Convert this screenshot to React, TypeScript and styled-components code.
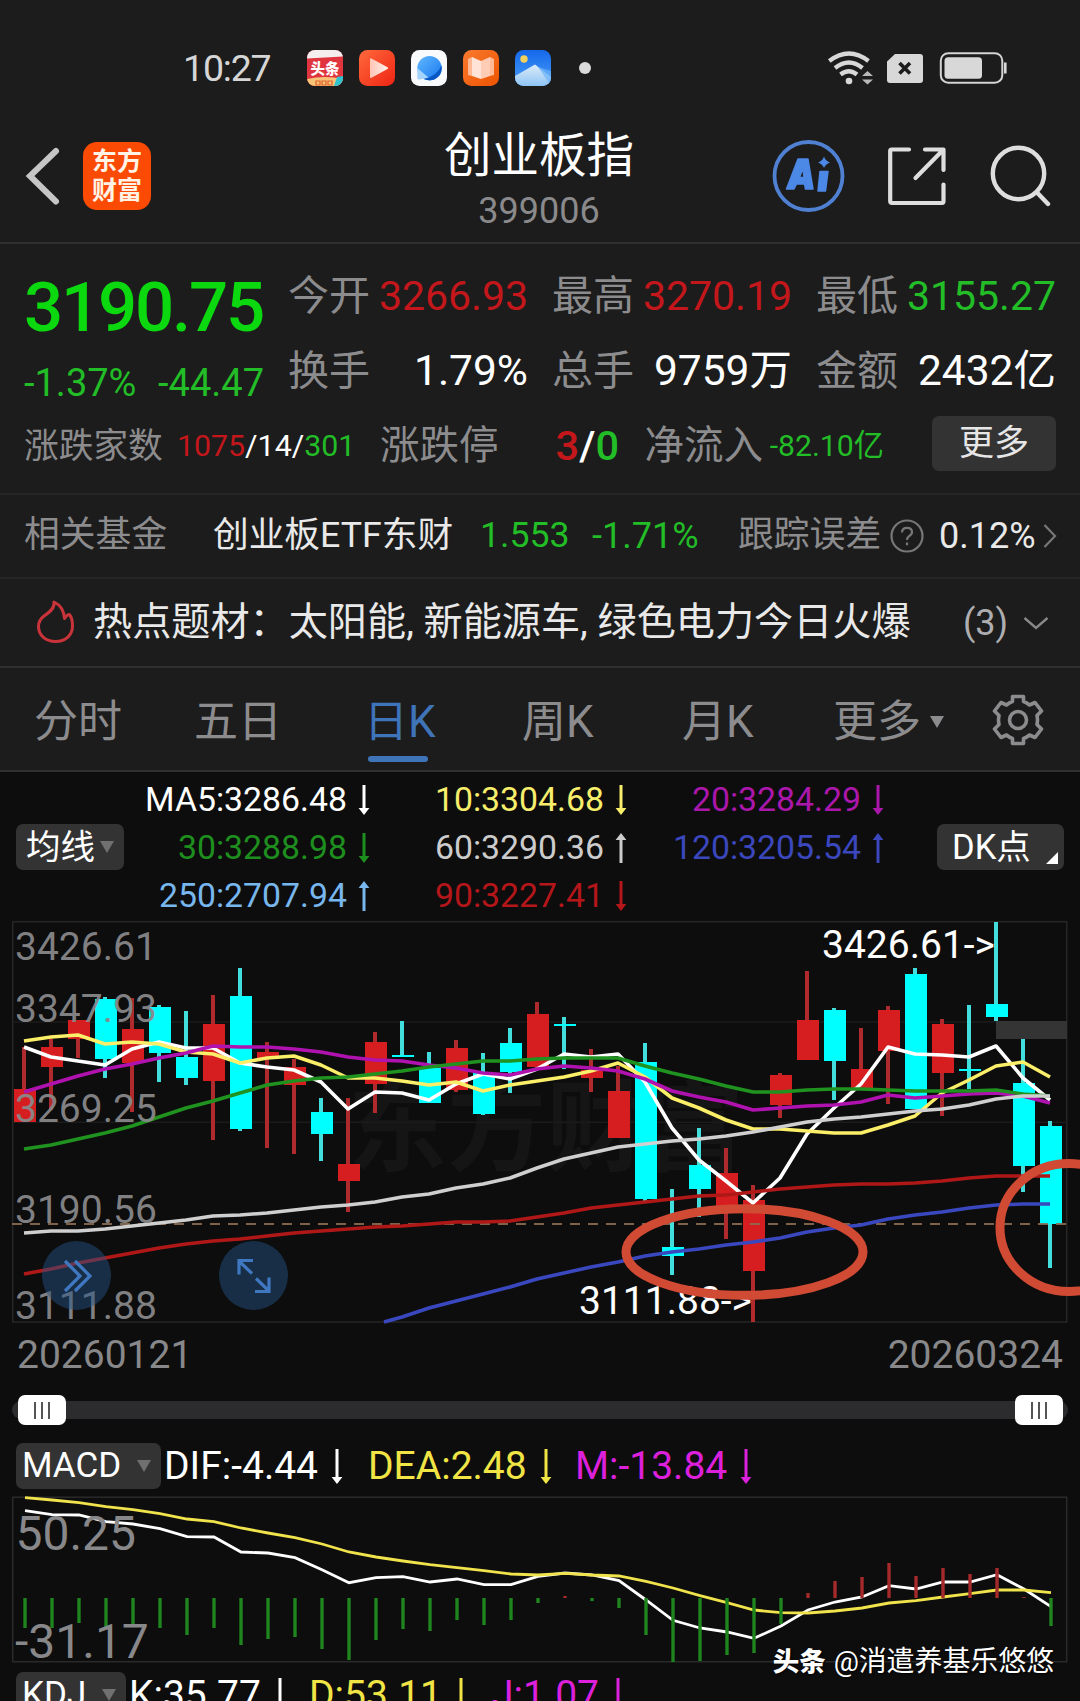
import React from "react";
import styled, { createGlobalStyle } from "styled-components";

const c = {
  panel: "#1c1c1c",
  deep: "#0d0d0d",
  line: "#303030",
  softLine: "#262626",
  label: "#8c8c8e",
  red: "#c4171b",
  green: "#22bd27",
  blue: "#3f74b8",
  chip: "#333333",
};

const Global = createGlobalStyle`
  html, body { margin: 0; background: ${c.deep}; }
  * { box-sizing: border-box; }
  button { border: 0; padding: 0; font: inherit; color: inherit; background: none; }
  svg { display: block; flex: none; }
`;

const Screen = styled.div`
  width: 1080px;
  height: 1701px;
  overflow: hidden;
  display: flex;
  flex-direction: column;
  background: ${c.deep};
  color: #fff;
  font-family: Roboto, "Noto Sans CJK SC", sans-serif;
  line-height: 1;
  white-space: nowrap;
`;

/* ---------- status bar ---------- */
const StatusBar = styled.div`
  height: 102px;
  flex: none;
  padding: 34px 73px 0 183px;
  display: flex;
  align-items: center;
  background: ${c.panel};
`;
const Clock = styled.span`
  width: 124px;
  padding-top: 2px;
  font-size: 37.5px;
  letter-spacing: -1.2px;
  color: #d6d6d6;
`;
const AppRow = styled.div`
  display: flex;
  gap: 16px;
  flex: 1;
  align-items: center;
`;
const Dot = styled.i`
  width: 12px;
  height: 12px;
  margin-left: 12px;
  border-radius: 50%;
  background: #dadada;
`;
const SystemIcons = styled.div`
  display: flex;
  align-items: center;
  gap: 14px;
`;

/* ---------- title bar ---------- */
const TitleBar = styled.header`
  height: 142px;
  flex: none;
  padding: 8px 29px 0 24px;
  display: grid;
  grid-template-columns: 320px 1fr 320px;
  align-items: center;
  background: ${c.panel};
  border-bottom: 2px solid ${c.line};
`;
const Side = styled.div<{ $end?: boolean }>`
  display: flex;
  align-items: center;
  justify-content: ${(p) => (p.$end ? "flex-end" : "flex-start")};
`;
const Brand = styled.div`
  width: 68px;
  height: 68px;
  margin-left: 21px;
  border-radius: 14px;
  background: #fb4a04;
  display: grid;
  place-content: center;
  text-align: center;
  font-size: 25px;
  line-height: 29px;
  font-weight: 700;
  color: #fff3e6;
`;
const Heading = styled.div`
  text-align: center;
  padding: 7px 0 0 3px;
`;
const Name = styled.h1`
  margin: 0;
  font-size: 47.5px;
  line-height: 56px;
  font-weight: 400;
`;
const Code = styled.div`
  margin-top: 6px;
  font-size: 36px;
  line-height: 42px;
  color: #8a8a8c;
`;

/* ---------- quote ---------- */
const Quote = styled.section`
  height: 251px;
  flex: none;
  padding: 15px 24px 0 24px;
  background: ${c.panel};
  border-bottom: 2px solid ${c.softLine};
`;
const QuoteTop = styled.div`
  display: flex;
  height: 149px;
`;
const PriceCol = styled.div`
  width: 264px;
  color: ${c.green};
`;
const Price = styled.div`
  height: 96px;
  line-height: 97px;
  font-size: 69px;
  font-weight: 500;
  letter-spacing: -2.2px;
  color: #0bd80f;
`;
const Change = styled.div`
  width: 240px;
  height: 55px;
  line-height: 56px;
  font-size: 38px;
  display: flex;
  justify-content: space-between;
`;
const Stats = styled.div`
  flex: 1;
  display: grid;
  grid-template-columns: repeat(3, 240px);
  grid-auto-rows: 75px;
  column-gap: 24px;
`;
const Stat = styled.div`
  display: flex;
  align-items: center;
  justify-content: space-between;
`;
const Label = styled.span<{ $size: number }>`
  font-size: ${(p) => p.$size}px;
  color: ${c.label};
`;
const Value = styled.span<{ $color?: string; $size?: number; $bold?: boolean }>`
  font-size: ${(p) => p.$size ?? 41.5}px;
  color: ${(p) => p.$color ?? "#fff"};
  font-weight: ${(p) => (p.$bold ? 500 : 400)};
`;
const Breadth = styled.div`
  height: 76px;
  display: flex;
  align-items: center;
`;
const Cell = styled.div<{ $w: number; $end?: boolean }>`
  width: ${(p) => p.$w}px;
  flex: none;
  display: flex;
  justify-content: ${(p) => (p.$end ? "flex-end" : "flex-start")};
`;
const MoreButton = styled.button`
  width: 124px;
  height: 55px;
  margin: 0 0 5px auto;
  border-radius: 7px;
  background: ${c.chip};
  color: #e6e6e6;
  font-size: 35px;
`;

/* ---------- related fund / hot topics ---------- */
const Strip = styled.div<{ $h: number; $strong?: boolean }>`
  height: ${(p) => p.$h}px;
  flex: none;
  padding: 0 24px;
  display: flex;
  align-items: center;
  background: ${c.panel};
  border-bottom: 2px solid ${(p) => (p.$strong ? c.line : c.softLine)};
  font-size: 35.7px;
  color: #e9e9e9;
`;
const Topic = styled.span`
  width: 870px;
  margin-left: 18px;
  padding-top: 1px;
  font-size: 39.15px;
`;
const Count = styled.span`
  width: 60px;
  font-size: 36px;
  color: #aeaeb0;
`;

/* ---------- period tabs ---------- */
const Tabs = styled.nav`
  height: 104px;
  flex: none;
  padding-left: 34px;
  display: flex;
  background: ${c.panel};
  border-bottom: 2px solid ${c.line};
`;
const Tab = styled.button<{ $w: number; $active?: boolean }>`
  width: ${(p) => p.$w}px;
  display: flex;
  flex-direction: column;
  align-items: flex-start;
  padding-top: 30px;
  font-size: 44px;
  line-height: 48px;
  color: ${(p) => (p.$active ? c.blue : "#8c8c8e")};
`;
const TabLine = styled.span`
  display: flex;
  align-items: center;
  gap: 9px;
`;
const Underline = styled.i`
  width: 60px;
  height: 6px;
  margin: 10px 0 0 4px;
  border-radius: 3px;
  background: ${c.blue};
`;
const Gear = styled.div`
  padding-top: 25px;
`;

/* ---------- main chart ---------- */
const LegendBar = styled.div`
  height: 148px;
  flex: none;
  padding: 2px 16px 0 16px;
  display: flex;
  align-items: center;
  justify-content: space-between;
`;
const Chip = styled.button<{ $w: number; $size?: number }>`
  width: ${(p) => p.$w}px;
  height: 46px;
  flex: none;
  padding: 0 10px 0 ${(p) => (p.$size ? 6 : 10)}px;
  border-radius: 7px;
  background: ${c.chip};
  color: #fff;
  font-size: ${(p) => p.$size ?? 34.5}px;
  line-height: 46px;
  display: flex;
  align-items: center;
  justify-content: space-between;
`;
const Corner = styled.i`
  align-self: flex-end;
  margin: 0 -4px 6px 0;
  border-left: 12px solid transparent;
  border-bottom: 12px solid #fff;
`;
const Down = styled.i<{ $w?: number; $color?: string }>`
  border: ${(p) => (p.$w ?? 14) / 2}px solid transparent;
  border-top: 12px solid ${(p) => p.$color ?? "#707070"};
  border-bottom: 0;
`;
const Legend = styled.div`
  display: grid;
  grid-template-columns: 248px 257px 257px;
  grid-auto-rows: 48px;
  flex: 1;
  padding-top: 1px;
`;
const LegendItem = styled.div<{ $color: string }>`
  display: flex;
  align-items: center;
  justify-content: flex-end;
  gap: 9px;
  font-size: 33.8px;
  color: ${(p) => p.$color};
`;
const ChartBox = styled.div`
  position: relative;
  height: 404px;
  flex: none;
`;
const Fab = styled.button<{ $left: number }>`
  position: absolute;
  left: ${(p) => p.$left}px;
  top: 321px;
  width: 69px;
  height: 69px;
  border-radius: 50%;
  background: rgba(38, 83, 134, 0.48);
  display: grid;
  place-items: center;
`;
const Dates = styled.div`
  height: 71px;
  flex: none;
  padding: 8px 17px 0 17px;
  display: flex;
  justify-content: space-between;
  font-size: 39px;
  line-height: 46px;
  color: #88888a;
`;
const Slider = styled.div`
  height: 30px;
  flex: none;
  padding: 0 12px;
  display: flex;
  align-items: center;
`;
const Track = styled.div`
  flex: 1;
  height: 18px;
  padding: 0 5px 0 6px;
  border-radius: 9px;
  background: #2c2c2e;
  display: flex;
  align-items: center;
  justify-content: space-between;
`;
const Handle = styled.span`
  width: 48px;
  height: 30px;
  border-radius: 7px;
  background: #fff;
  display: flex;
  align-items: center;
  justify-content: center;
  gap: 5px;
`;
const Grip = styled.i`
  width: 2px;
  height: 17px;
  background: #555;
`;
const IndicatorBar = styled.div<{ $top: number; $bottom: number }>`
  flex: none;
  height: 46px;
  margin: ${(p) => p.$top}px 0 ${(p) => p.$bottom}px;
  padding-left: 16px;
  display: flex;
  align-items: center;
`;
const Reading = styled.span<{ $color: string; $w: number; $gap?: number }>`
  width: ${(p) => p.$w}px;
  margin-left: ${(p) => p.$gap ?? 0}px;
  display: flex;
  align-items: center;
  gap: 11px;
  font-size: 39px;
  color: ${(p) => p.$color};
`;
const MacdBox = styled.div`
  position: relative;
  height: 167px;
  flex: none;
`;
const Author = styled.div`
  position: absolute;
  right: 26px;
  top: 152px;
  display: flex;
  align-items: center;
  gap: 8px;
  font-size: 28px;
  letter-spacing: -0.1px;
  color: #fff;
  text-shadow: 1px 1px 2px #000;
  b { font-weight: 900; font-size: 26.5px; }
`;

/* ---------- data ---------- */
// Each candle: up flag, high, open/close top, open/close bottom, low (screen units)
const candles: [number, number, number, number, number][] = [
  [1, 1047, 1089, 1122, 1122], [1, 1039, 1047, 1067, 1110], [1, 1020, 1020, 1039, 1058],
  [0, 997, 999, 1059, 1078], [1, 998, 1029, 1063, 1112], [0, 1005, 1007, 1053, 1082],
  [0, 1011, 1057, 1078, 1085], [1, 995, 1024, 1081, 1140], [0, 968, 996, 1129, 1131],
  [1, 1042, 1052, 1059, 1148], [1, 1059, 1067, 1085, 1154], [0, 1098, 1112, 1134, 1161],
  [1, 1098, 1164, 1181, 1212], [1, 1032, 1042, 1084, 1113], [0, 1021, 1055, 1057, 1057],
  [0, 1052, 1068, 1103, 1103], [1, 1040, 1048, 1090, 1092], [0, 1053, 1073, 1114, 1115],
  [0, 1028, 1043, 1072, 1093], [1, 1002, 1014, 1067, 1067], [0, 1017, 1024, 1026, 1069],
  [1, 1049, 1070, 1078, 1092], [1, 1066, 1091, 1138, 1138], [0, 1043, 1062, 1199, 1201],
  [0, 1189, 1247, 1256, 1275], [0, 1128, 1165, 1189, 1217], [1, 1148, 1173, 1207, 1239],
  [1, 1185, 1200, 1271, 1322], [1, 1073, 1075, 1105, 1118], [1, 971, 1020, 1060, 1060],
  [0, 1008, 1010, 1061, 1100], [1, 1028, 1069, 1088, 1088], [1, 1006, 1010, 1051, 1104],
  [0, 968, 974, 1109, 1109], [1, 1019, 1024, 1073, 1116], [0, 1005, 1069, 1071, 1089],
  [0, 922, 1004, 1017, 1021], [0, 1039, 1083, 1166, 1192], [0, 1121, 1126, 1224, 1268],
];

const averages: { color: string; ys: number[] }[] = [
  { color: "#ffffff", ys: [1047, 1057, 1061, 1065, 1049, 1042, 1048, 1048, 1063, 1067, 1070, 1082, 1109, 1092, 1093, 1100, 1084, 1074, 1079, 1069, 1054, 1057, 1054, 1082, 1128, 1160, 1181, 1203, 1178, 1134, 1108, 1084, 1047, 1054, 1055, 1057, 1046, 1078, 1100] },
  { color: "#fbee68", ys: [1041, 1037, 1035, 1044, 1042, 1044, 1052, 1054, 1063, 1058, 1056, 1065, 1078, 1078, 1081, 1085, 1082, 1091, 1085, 1081, 1077, 1071, 1063, 1077, 1098, 1108, 1120, 1129, 1129, 1131, 1133, 1133, 1125, 1116, 1093, 1080, 1066, 1062, 1077] },
  { color: "#b012b0", ys: [1092, 1084, 1076, 1069, 1064, 1058, 1053, 1046, 1047, 1047, 1049, 1052, 1057, 1060, 1061, 1065, 1068, 1073, 1075, 1069, 1066, 1068, 1071, 1079, 1091, 1097, 1102, 1110, 1108, 1106, 1105, 1102, 1095, 1098, 1096, 1094, 1093, 1096, 1103] },
  { color: "#1f921f", ys: [1149, 1145, 1139, 1133, 1126, 1117, 1108, 1101, 1093, 1085, 1081, 1078, 1077, 1074, 1071, 1067, 1064, 1061, 1061, 1059, 1058, 1058, 1058, 1066, 1073, 1079, 1086, 1092, 1092, 1090, 1089, 1089, 1090, 1091, 1091, 1091, 1090, 1094, 1096] },
  { color: "#cfcfcf", ys: [1233, 1231, 1231, 1229, 1226, 1223, 1220, 1216, 1215, 1213, 1210, 1207, 1205, 1202, 1197, 1194, 1188, 1184, 1178, 1168, 1159, 1153, 1147, 1144, 1141, 1139, 1136, 1132, 1127, 1122, 1119, 1117, 1114, 1111, 1109, 1105, 1099, 1096, 1096] },
  { color: "#b01818", ys: [1274, 1269, 1263, 1258, 1253, 1248, 1244, 1241, 1239, 1236, 1233, 1231, 1229, 1227, 1226, 1224, 1222, 1222, 1221, 1217, 1213, 1208, 1205, 1202, 1199, 1196, 1195, 1192, 1189, 1187, 1185, 1184, 1184, 1183, 1181, 1178, 1176, 1176, 1176] },
];
const ma120 = [1317, 1308, 1301, 1294, 1287, 1279, 1273, 1267, 1262, 1256, 1252, 1249, 1245, 1242, 1238, 1232, 1228, 1225, 1219, 1215, 1212, 1208, 1205, 1204, 1204];

const bars = [30, 30, 25, 29, 27, 30, 37, 30, 47, 41, 39, 51, 62, 42, 31, 33, 22, 27, 22, 5, -2, 3, 10, 37, 64, 63, 57, 55, 26, -5, -17, -21, -35, -22, -30, -24, -30, -1, 28];
const dif = [272, 284, 285, 305, 312, 326, 350, 351, 396, 399, 413, 449, 488, 473, 470, 486, 477, 494, 494, 469, 459, 465, 482, 540, 601, 624, 636, 655, 618, 570, 546, 531, 497, 507, 486, 486, 464, 507, 560];
const dea = [233, 240, 248, 260, 269, 281, 297, 305, 324, 339, 353, 372, 396, 411, 423, 434, 443, 452, 462, 465, 460, 465, 468, 484, 504, 527, 548, 570, 578, 579, 573, 564, 549, 542, 531, 521, 510, 510, 518];

const STEP = 27;
const poly = (ys: number[], x0: number) => ys.map((y, i) => `${x0 + i * STEP},${y}`).join(" ");
const polyMacd = (ys: number[]) => ys.map((y, i) => `${25 + i * STEP},${y / 3 - 76}`).join(" ");

/* ---------- small drawings ---------- */
const Arrow = ({ up, h = 30 }: { up?: boolean; h?: number }) => (
  <svg width="16" height={h} viewBox={`0 0 16 ${h}`}>
    <g transform={up ? `rotate(180 8 ${h / 2})` : undefined} fill="currentColor">
      <rect x="6.500" y="0" width="3" height={h - 4} />
      <path d={`M2.6 ${h - 7}H13.4L8 ${h}Z`} />
    </g>
  </svg>
);

const ToutiaoIcon = () => (
  <svg width="36" height="36" viewBox="0 0 36 36">
    <defs><clipPath id="tt"><rect width="36" height="36" rx="8" /></clipPath></defs>
    <g clipPath="url(#tt)">
      <rect width="36" height="36" fill="#e0343f" />
      <path d="M0 0H36V6.500L0 8.500Z" fill="#f4eeee" />
      <path d="M0 29Q18 25 36 29V36H0Z" fill="#f7c377" />
      <path d="M30 27l6-1v10h-9z" fill="#2fc3cf" />
      <text x="18" y="23.500" textAnchor="middle" fontSize="14.500" fontWeight="900" fill="#fff">头条</text>
      <path d="M9 31h4v4H9zM15 31h4v4h-4zM21 31h4v4h-4z" fill="none" stroke="#e0602c" strokeWidth="1.200" />
    </g>
  </svg>
);
const VideoIcon = () => (
  <svg width="36" height="36" viewBox="0 0 36 36">
    <defs>
      <linearGradient id="vd" x1="0" y1="0" x2="1" y2="1"><stop offset="0" stopColor="#ff6a3c" /><stop offset="1" stopColor="#ee2413" /></linearGradient>
      <linearGradient id="vp" x1="0" y1="0" x2="1" y2="0"><stop offset="0" stopColor="#ffc4b4" /><stop offset="1" stopColor="#fff3ee" /></linearGradient>
    </defs>
    <rect width="36" height="36" rx="8.500" fill="url(#vd)" />
    <path d="M11 9.200Q11 7.600 12.500 8.400L28.500 17.200Q30 18 28.500 18.900L12.500 27.700Q11 28.500 11 27Z" fill="url(#vp)" />
  </svg>
);
const BrowserIcon = () => (
  <svg width="36" height="36" viewBox="0 0 36 36">
    <defs><linearGradient id="br" x1="0" y1="0" x2="1" y2="1"><stop offset="0" stopColor="#62b8ff" /><stop offset="1" stopColor="#1677ee" /></linearGradient></defs>
    <rect width="36" height="36" rx="8.500" fill="#f8fafc" />
    <circle cx="18.500" cy="18.200" r="12.200" fill="url(#br)" />
    <path d="M6.300 18V28.500Q6.500 29.500 8 29.500L18 28Z" fill="#a4d4fb" />
    <path d="M30.600 15.500Q26 26 13 29Q22 32.500 28 26Q31.500 21.500 30.600 15.500Z" fill="#0757c4" />
  </svg>
);
const BookIcon = () => (
  <svg width="36" height="36" viewBox="0 0 36 36">
    <defs><linearGradient id="bk" x1="0" y1="0" x2="1" y2="1"><stop offset="0" stopColor="#f97a2f" /><stop offset="1" stopColor="#ec5300" /></linearGradient></defs>
    <rect width="36" height="36" rx="8.500" fill="url(#bk)" />
    <path d="M5 9L9 7V26L5 25ZM31 9L27 7V26L31 25Z" fill="#ffb995" />
    <path d="M9 7L18 11V29L9 26Z" fill="#ffe3d6" />
    <path d="M27 7L18 11V29L27 26Z" fill="#ffcdb6" />
  </svg>
);
const GalleryIcon = () => (
  <svg width="36" height="36" viewBox="0 0 36 36">
    <defs>
      <clipPath id="gl"><rect width="36" height="36" rx="8.500" /></clipPath>
      <linearGradient id="gs" x1="0" y1="0" x2="0" y2="1"><stop offset="0" stopColor="#1568ea" /><stop offset="1" stopColor="#4aa0f8" /></linearGradient>
      <linearGradient id="gm" x1="0" y1="0" x2="0" y2="1"><stop offset="0" stopColor="#dcecf8" /><stop offset="1" stopColor="#8fc4f4" /></linearGradient>
    </defs>
    <g clipPath="url(#gl)">
      <rect width="36" height="36" fill="url(#gs)" />
      <path d="M0 26L20 14.500L36 27V36H0Z" fill="url(#gm)" />
      <path d="M23 17L36 21V36Z" fill="#6eb4f8" opacity=".7" />
      <circle cx="9" cy="9" r="3.700" fill="#f2d15c" />
    </g>
  </svg>
);
const Wifi = () => (
  <svg width="45" height="34" viewBox="0 0 45 34">
    <g fill="none" stroke="#d8d8d8" strokeWidth="4.300">
      <path d="M1.300 10Q21 -5 40.500 10" />
      <path d="M7 17Q21 6 34.500 17" />
      <path d="M12.500 23.500Q21 17 29 23.500" />
    </g>
    <circle cx="21" cy="30" r="3.300" fill="#d8d8d8" />
    <path d="M34 25l5.500-5 5.500 5zM34 28.500l5.500 5 5.500-5z" fill="#b8b8b8" />
  </svg>
);
const Sim = () => (
  <svg width="36" height="29" viewBox="0 0 36 29">
    <path d="M8 0H33Q36 0 36 3V26Q36 29 33 29H3Q0 29 0 26V7.500Z" fill="#d8d8d8" />
    <path d="M12.500 9L23 19.500M23 9L12.500 19.500" stroke="#1c1c1c" strokeWidth="3.600" />
  </svg>
);
const Battery = () => (
  <svg width="68" height="32" viewBox="0 0 68 32" style={{ marginLeft: 2 }}>
    <rect x="1.800" y="1.200" width="61.500" height="29.500" rx="7.500" fill="none" stroke="#d4d4d4" strokeWidth="2" />
    <rect x="5.500" y="5.200" width="37.500" height="21.500" rx="3.500" fill="#d8d8d8" />
    <rect x="65" y="10.500" width="2.600" height="11" fill="#d8d8d8" />
  </svg>
);

const MainChart = () => (
  <svg width="1080" height="404" viewBox="0 920 1080 404" fontFamily='Roboto, "Noto Sans CJK SC", sans-serif'>
    <text x="348" y="1163" fontSize="99" fontWeight="700" fill="#151515">东方财富</text>
    <g fill="none" stroke="#262626" strokeWidth="1.500">
      <rect x="12.700" y="921.700" width="1054" height="400.300" />
      <path d="M13 1022H1067M13 1122.300H1067" stroke="#1b1b1b" />
    </g>
    <rect x="996" y="1021" width="71" height="18" fill="#343434" />
    {candles.map(([up, hi, top, bot, lo], i) => (
      <g key={i}>
        <rect x={22 + i * STEP} y={hi} width="4" height={lo - hi} fill={up ? "#ae2a2c" : "#42dede"} />
        <rect x={14 + i * STEP} y={top} width="22" height={bot - top} fill={up ? "#d61e20" : "#00ffff"} />
      </g>
    ))}
    <path d="M12 1224H1067" stroke="#8a6c50" strokeWidth="1.900" strokeDasharray="10 8" opacity=".9" />
    <g fill="none" strokeWidth="3.600" strokeLinejoin="round">
      {averages.map((m) => (
        <polyline key={m.color} points={poly(m.ys, 24)} stroke={m.color} />
      ))}
      <polyline points={`384,1322 ${poly(ma120, 402)}`} stroke="#3a48c0" />
    </g>
    <g fontSize="39" fill="#88888a" fillOpacity=".95">
      <text x="15" y="960">3426.61</text>
      <text x="15" y="1022">3347.93</text>
      <text x="15" y="1122">3269.25</text>
      <text x="15" y="1223">3190.56</text>
      <text x="15" y="1319">3111.88</text>
    </g>
    <g fontSize="39" fill="#fff">
      <text x="822" y="958">{"3426.61->"}</text>
      <text x="579" y="1314">{"3111.88->"}</text>
    </g>
    <rect x="751" y="1272" width="4" height="50" fill="#ae2a2c" />
    <g fill="none" stroke="#d04a34" strokeWidth="9">
      <ellipse cx="744.500" cy="1252" rx="118.500" ry="43.300" />
      <ellipse cx="1069" cy="1227.500" rx="69" ry="64" />
    </g>
  </svg>
);

const MacdChart = () => (
  <svg width="1080" height="167" viewBox="0 0 1080 167" fontFamily="Roboto, sans-serif">
    <rect x="12.700" y="1.200" width="1054" height="164.500" fill="none" stroke="#2a2a2a" strokeWidth="1.500" />
    <polyline points={polyMacd(dif)} fill="none" stroke="#fff" strokeWidth="2.800" />
    <polyline points={polyMacd(dea)} fill="none" stroke="#f0e34c" strokeWidth="2.800" />
    {bars.map((b, i) => (
      <rect key={i} x={23.3 + i * STEP} y={b > 0 ? 102 : 102 + b} width="3.400" height={Math.abs(b)} fill={b > 0 ? "#1f851f" : "#a52a2c"} />
    ))}
    <g fontSize="48" fill="#88888a">
      <text x="15.500" y="54">50.25</text>
      <text x="15" y="162">-31.17</text>
    </g>
  </svg>
);

const legend: [string, string, boolean][] = [
  ["MA5:3286.48", "#ffffff", false], ["10:3304.68", "#f7ee6c", false], ["20:3284.29", "#ab17ab", false],
  ["30:3288.98", "#1e8f1e", false], ["60:3290.36", "#cccccc", true], ["120:3205.54", "#3b47bd", true],
  ["250:2707.94", "#78b6ee", true], ["90:3227.41", "#b4161a", false],
];

const stats: [string, string, number, string?][] = [
  ["今开", "3266.93", 41, c.red], ["最高", "3270.19", 41, c.red], ["最低", "3155.27", 41, c.green],
  ["换手", "1.79%", 42.5], ["总手", "9759万", 42.5], ["金额", "2432亿", 42.5],
];

const SliderHandle = () => <Handle><Grip /><Grip /><Grip /></Handle>;

export default function App() {
  return (
    <Screen>
      <Global />
      <StatusBar>
        <Clock>10:27</Clock>
        <AppRow>
          <ToutiaoIcon /><VideoIcon /><BrowserIcon /><BookIcon /><GalleryIcon />
          <Dot />
        </AppRow>
        <SystemIcons><Wifi /><Sim /><Battery /></SystemIcons>
      </StatusBar>

      <TitleBar>
        <Side>
          <svg width="38" height="60" viewBox="0 0 38 60"><path d="M32 5L6 30L32 55.500" fill="none" stroke="#c6c6c6" strokeWidth="6" strokeLinecap="round" /></svg>
          <Brand><span>东方</span><span>财富</span></Brand>
        </Side>
        <Heading>
          <Name>创业板指</Name>
          <Code>399006</Code>
        </Heading>
        <Side $end>
          <svg width="74" height="74" viewBox="0 0 74 74">
            <circle cx="36.500" cy="37" r="34" fill="none" stroke="#4f80d2" strokeWidth="3.800" />
            <path fillRule="evenodd" fill="#4c88e6" stroke="#4c88e6" strokeWidth="1.500" strokeLinejoin="round" d="M26 20H36L41 50H33.500L32.500 45H24.500L22 50H14.500ZM27.500 38.500H32L31 29Z" />
            <path fill="#4c88e6" stroke="#4c88e6" strokeWidth="1.500" strokeLinejoin="round" d="M48 32.500H56L53.500 52H46Z" />
            <path fill="#4c88e6" d="M52 17.500Q53.500 22 58 23.500Q53.500 25 52 29Q50.500 25 46 23.500Q50.500 22 52 17.500Z" />
          </svg>
          <svg width="60" height="60" viewBox="0 0 60 60" style={{ marginLeft: 41 }}>
            <g fill="none" stroke="#dedede" strokeWidth="4.200" strokeLinecap="round" strokeLinejoin="round">
              <path d="M22 3.500H4.500Q3.200 3.500 3.200 5V55Q3.200 57 5 57H55Q56.500 57 56.500 55V38.500" />
              <path d="M38 3.500H56.500V24M56 4L28.500 32" />
            </g>
          </svg>
          <svg width="62" height="62" viewBox="0 0 62 62" style={{ marginLeft: 42 }}>
            <g fill="none" stroke="#dedede" strokeWidth="4.400" strokeLinecap="round">
              <circle cx="29.500" cy="28.500" r="25.700" />
              <path d="M48.500 48L59 59" />
            </g>
          </svg>
        </Side>
      </TitleBar>

      <Quote>
        <QuoteTop>
          <PriceCol>
            <Price>3190.75</Price>
            <Change><span>-1.37%</span><span>-44.47</span></Change>
          </PriceCol>
          <Stats>
            {stats.map(([label, value, size, color]) => (
              <Stat key={label}><Label $size={41}>{label}</Label><Value $size={size} $color={color}>{value}</Value></Stat>
            ))}
          </Stats>
        </QuoteTop>
        <Breadth>
          <Cell $w={153}><Label $size={34.7}>涨跌家数</Label></Cell>
          <Cell $w={203}>
            <Value $size={30.3} $color={c.red}>1075</Value><Value $size={30.3}>/14/</Value><Value $size={30.3} $color={c.green}>301</Value>
          </Cell>
          <Cell $w={120}><Label $size={39.5}>涨跌停</Label></Cell>
          <Cell $w={119} $end>
            <Value $bold $color={c.red}>3</Value><Value $bold>/</Value><Value $bold $color={c.green}>0</Value>
          </Cell>
          <Cell $w={144} $end><Label $size={39.5}>净流入</Label></Cell>
          <Cell $w={121} $end><Value $size={30.2} $color={c.green}>-82.10亿</Value></Cell>
          <MoreButton>更多</MoreButton>
        </Breadth>
      </Quote>

      <Strip $h={84}>
        <Cell $w={189}><Label $size={35.8}>相关基金</Label></Cell>
        <Cell $w={267}>创业板ETF东财</Cell>
        <Cell $w={112}><Value $size={35.7} $color={c.green}>1.553</Value></Cell>
        <Cell $w={146}><Value $size={36} $color={c.green}>-1.71%</Value></Cell>
        <Cell $w={152}><Label $size={35.8}>跟踪误差</Label></Cell>
        <svg width="34" height="34" viewBox="0 0 34 34" fill="none" stroke="#77777a" strokeWidth="2.200">
          <circle cx="17" cy="17" r="15.500" />
          <path d="M12 13.500Q12 8.800 17 8.800Q22 8.800 22 13Q22 15.500 19 17.300Q17 18.500 17 21" />
          <path d="M17 23.500V26.300" />
        </svg>
        <Cell $w={104} style={{ marginLeft: 15 }}><Value $size={36} $color="#e9e9e9">0.12%</Value></Cell>
        <svg width="14" height="26" viewBox="0 0 14 26"><path d="M1.500 2L12 13L1.500 24" fill="none" stroke="#77777a" strokeWidth="2.200" /></svg>
      </Strip>

      <Strip $h={89} $strong>
        <svg width="39" height="44" viewBox="0 0 39 44" style={{ marginLeft: 12, marginBottom: 2 }}>
          <path d="M18 2C19 8 14 12 8 16C4 19 2.500 23 2.500 26.500C2.500 35.500 10 41.500 19.500 41.500C29 41.500 36.500 35.500 36.500 26C36.500 21 35.500 17 33.500 14.500C32 14.500 30 16 28.500 18.500C28 11 24.500 5 18 2Z" fill="none" stroke="#c9333a" strokeWidth="3" strokeLinejoin="round" />
        </svg>
        <Topic>热点题材：太阳能, 新能源车, 绿色电力今日火爆</Topic>
        <Count>(3)</Count>
        <svg width="26" height="16" viewBox="0 0 26 16"><path d="M1.500 3L13 13L24.500 3" fill="none" stroke="#88888a" strokeWidth="2.400" /></svg>
      </Strip>

      <Tabs>
        <Tab $w={160}>分时</Tab>
        <Tab $w={170}>五日</Tab>
        <Tab $w={158} $active>日K<Underline /></Tab>
        <Tab $w={160}>周K</Tab>
        <Tab $w={151}>月K</Tab>
        <Tab $w={158}><TabLine>更多<Down $color="#8c8c8e" /></TabLine></Tab>
        <Gear>
          <svg width="54" height="54" viewBox="0 0 54 54" fill="none" stroke="#8c8c8e" strokeWidth="3.600" strokeLinejoin="round">
            <path d="M21.500 3.500H32.500V8.500Q35.500 9.500 38.500 12L44 9.500L50.500 18L46 22.500Q47 27 46 31.500L50.500 36L44 44.500L38.500 42Q35.500 44.500 32.500 45.500V50.500H21.500V45.500Q18.500 44.500 15.500 42L10 44.500L3.500 36L8 31.500Q7 27 8 22.500L3.500 18L10 9.500L15.500 12Q18.500 9.500 21.500 8.500Z" />
            <circle cx="27" cy="27" r="8.500" />
          </svg>
        </Gear>
      </Tabs>

      <LegendBar>
        <Chip $w={108}>均线<Down /></Chip>
        <Legend>
          {legend.map(([text, color, up]) => (
            <LegendItem key={text} $color={color}>{text}<Arrow up={up} /></LegendItem>
          ))}
        </Legend>
        <Chip $w={127} style={{ paddingLeft: 15 }}>DK点<Corner /></Chip>
      </LegendBar>

      <ChartBox>
        <MainChart />
        <Fab $left={42}>
          <svg width="30" height="34" viewBox="0 0 30 34" fill="none" stroke="#3f78c0" strokeWidth="3.200"><path d="M3 2L18 17L3 32M13 2L28 17L13 32" /></svg>
        </Fab>
        <Fab $left={219}>
          <svg width="36" height="36" viewBox="0 0 36 36" fill="none" stroke="#3f78c0" strokeWidth="3.200"><path d="M17 2.500H3V16.500M3 3L16 15.500M33 19.500V33.500H19M33 33L20 20.500" /></svg>
        </Fab>
      </ChartBox>

      <Dates><span>20260121</span><span>20260324</span></Dates>
      <Slider><Track><SliderHandle /><SliderHandle /></Track></Slider>

      <IndicatorBar $top={18} $bottom={7}>
        <Chip $w={145} $size={35}>MACD<Down /></Chip>
        <Reading $color="#fff" $w={204} $gap={3}>DIF:-4.44<Arrow h={35} /></Reading>
        <Reading $color="#f1e546" $w={207}>DEA:2.48<Arrow h={35} /></Reading>
        <Reading $color="#dc20dc" $w={200}>M:-13.84<Arrow h={35} /></Reading>
      </IndicatorBar>
      <MacdBox>
        <MacdChart />
        <Author><b>头条</b><span>@消遣养基乐悠悠</span></Author>
      </MacdBox>
      <IndicatorBar $top={9} $bottom={0}>
        <Chip $w={110} $size={35}>KDJ<Down /></Chip>
        <Reading $color="#fff" $w={180} $gap={3}>K:35.77<Arrow h={35} /></Reading>
        <Reading $color="#f1e546" $w={183}>D:53.11<Arrow h={35} /></Reading>
        <Reading $color="#dc20dc" $w={200}>J:1.07<Arrow h={35} /></Reading>
      </IndicatorBar>
    </Screen>
  );
}
